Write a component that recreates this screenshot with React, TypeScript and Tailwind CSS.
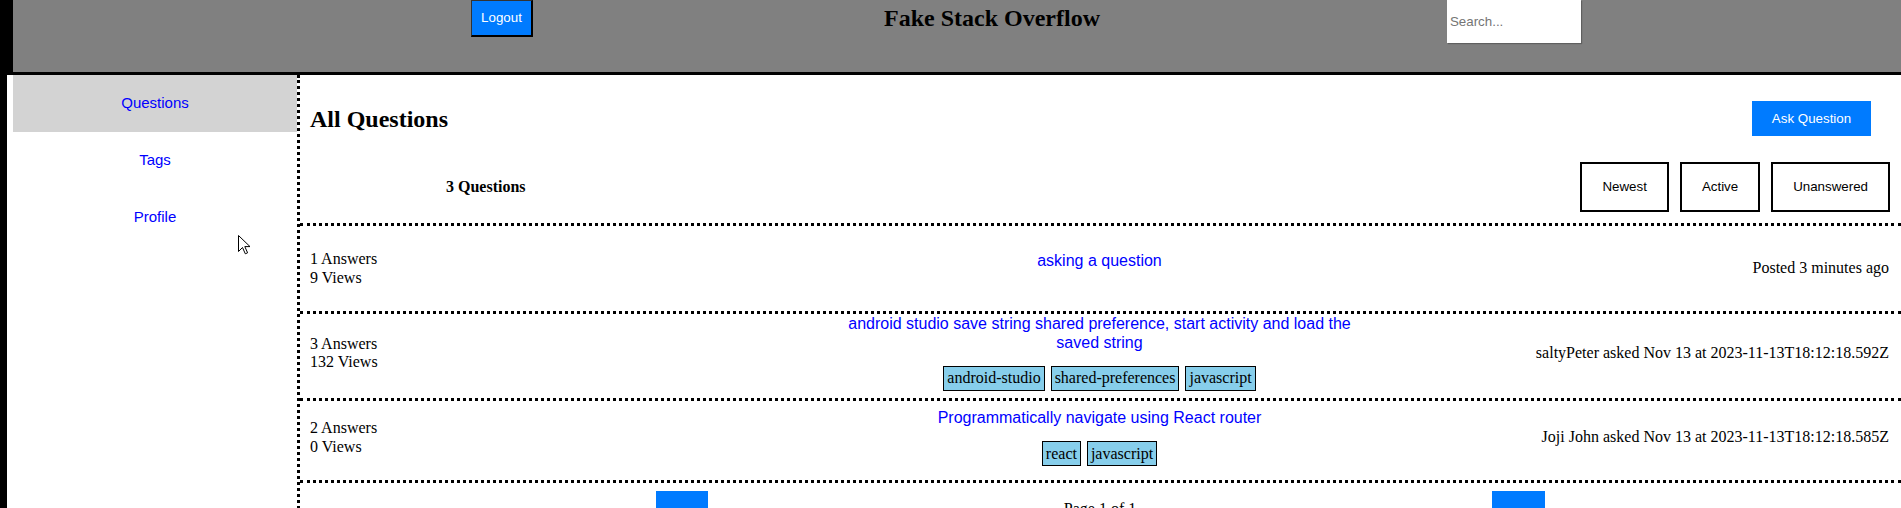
import React from "react";

type Question = {
  answers: number;
  views: number;
  title: string;
  tags: string[];
  meta: string;
  rowClass: string;
};

const questions: Question[] = [
  {
    answers: 1,
    views: 9,
    title: "asking a question",
    tags: [],
    meta: "Posted 3 minutes ago",
    rowClass: "h-[88px] pb-0",
  },
  {
    answers: 3,
    views: 132,
    title:
      "android studio save string shared preference, start activity and load the saved string",
    tags: ["android-studio", "shared-preferences", "javascript"],
    meta: "saltyPeter asked Nov 13 at 2023-11-13T18:12:18.592Z",
    rowClass: "min-h-[87px] pb-[6px]",
  },
  {
    answers: 2,
    views: 0,
    title: "Programmatically navigate using React router",
    tags: ["react", "javascript"],
    meta: "Joji John asked Nov 13 at 2023-11-13T18:12:18.585Z",
    rowClass: "h-[82px] pb-[6px]",
  },
];

const sideLinks = ["Questions", "Tags", "Profile"];
const sortButtons = ["Newest", "Active", "Unanswered"];

const Header = () => (
  <header className="flex h-[75px] shrink-0 items-start border-b-[3px] border-l-[6px] border-black bg-[#808080]">
    <button className="ml-[458px] h-[37px] w-[62px] border-t border-l border-r-2 border-b-2 border-t-[#333] border-l-[#333] border-r-black border-b-black bg-[#007bff] font-['Liberation_Sans',sans-serif] text-[13.33px] text-white">
      Logout
    </button>
    <h1 className="ml-[351px] mt-[5px] text-[24px] font-bold leading-[27px] text-black">
      Fake Stack Overflow
    </h1>
    <input
      className="ml-[347px] h-[43px] w-[134px] border-0 bg-white px-[3px] font-['Liberation_Sans',sans-serif] text-[13.33px] text-black shadow-[1px_1px_1px_rgba(0,0,0,0.25)] outline-none placeholder:text-[#757575]"
      placeholder="Search..."
    />
  </header>
);

const Sidebar = () => (
  <nav className="w-[284px] shrink-0 font-['Liberation_Sans',sans-serif]">
    {sideLinks.map((link, i) => (
      <div
        key={link}
        className={
          i === 0
            ? "flex h-[57px] items-center justify-center bg-[#d3d3d3] text-[15px] text-[#0000ff]"
            : "flex h-[57px] items-center justify-center text-[15px] text-[#0000ff]"
        }
      >
        {link}
      </div>
    ))}
  </nav>
);

const QuestionRow = ({ q }: { q: Question }) => (
  <div
    className={`grid grid-cols-3 items-center border-b-[3px] border-dotted border-black pl-[10px] pr-[12px] ${q.rowClass}`}
  >
    <div className="text-[16px] leading-[18.4px] text-black">
      <div>{q.answers} Answers</div>
      <div>{q.views} Views</div>
    </div>
    <div className="flex flex-col items-center">
      <div className="text-center font-['Liberation_Sans',sans-serif] text-[16px] leading-[18.4px] text-[#0000ff]">
        {q.title}
      </div>
      <div className="mt-[14px] flex justify-center gap-[6px]">
        {q.tags.map((tag) => (
          <span
            key={tag}
            className="flex h-[25px] items-center border border-black bg-[#87ceeb] px-[3px] text-[16px] leading-[18px] text-black"
          >
            {tag}
          </span>
        ))}
      </div>
    </div>
    <div className="text-right text-[16px] leading-[18.4px] text-black">
      {q.meta}
    </div>
  </div>
);

const App = () => {
  return (
    <div className="relative flex min-h-screen bg-white font-['Liberation_Serif',serif]">
      <div className="w-[7px] shrink-0 bg-black" />
      <div className="flex flex-1 flex-col">
        <Header />
        <div className="flex flex-1 pl-[6px]">
          <Sidebar />
          <main className="flex-1 border-l-[3px] border-dotted border-black">
            <div className="border-b-[3px] border-dotted border-black pb-[11px] pt-[26px]">
              <div className="flex h-[35px] items-center justify-between pl-[10px] pr-[30px]">
                <h2 className="text-[24px] font-bold leading-[28px] text-black">
                  All Questions
                </h2>
                <button className="h-[35px] w-[119px] bg-[#007bff] font-['Liberation_Sans',sans-serif] text-[13.33px] text-white">
                  Ask Question
                </button>
              </div>
              <div className="mt-[26px] flex h-[50px] items-center justify-between pl-[146px] pr-[11px]">
                <div className="text-[16px] font-bold leading-[18px] text-black">
                  3 Questions
                </div>
                <div className="flex gap-[11px]">
                  {sortButtons.map((b) => (
                    <button
                      key={b}
                      className="h-[50px] border-2 border-black bg-white px-[20px] font-['Liberation_Sans',sans-serif] text-[13.33px] text-black"
                    >
                      {b}
                    </button>
                  ))}
                </div>
              </div>
            </div>
            {questions.map((q) => (
              <QuestionRow key={q.title} q={q} />
            ))}
            <div className="flex items-start justify-center gap-[356px] pt-[8px]">
              <button className="h-[48px] w-[52px] bg-[#007bff] font-['Liberation_Sans',sans-serif] text-[13.33px] text-white">
                Prev
              </button>
              <span className="pt-[9px] text-[16px] leading-[18px] text-black">
                Page 1 of 1
              </span>
              <button className="h-[48px] w-[53px] bg-[#007bff] font-['Liberation_Sans',sans-serif] text-[13.33px] text-white">
                Next
              </button>
            </div>
          </main>
        </div>
      </div>
      {/* mouse pointer left in the capture */}
      <svg
        className="absolute left-[238px] top-[235px]"
        width="13"
        height="20"
        viewBox="0 0 13 20"
      >
        <path
          d="M0.5 0.5 L0.5 16.5 L4.5 12.5 L7.3 18.8 L9.6 17.8 L6.8 11.6 L12 11.6 Z"
          fill="white"
          stroke="black"
          strokeWidth="1"
        />
      </svg>
    </div>
  );
};

export default App;
